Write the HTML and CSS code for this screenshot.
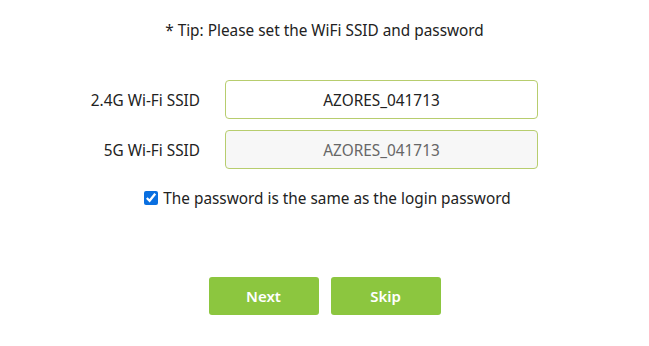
FILE: index.html
```html
<!DOCTYPE html>
<html>
<head>
<meta charset="utf-8">
<link rel="stylesheet" href="styles.css">
</head>
<body>
<div class="page">
  <p class="tip">* Tip: Please set the WiFi SSID and password</p>
  <div class="form">
    <div class="row">
      <label class="label">2.4G Wi-Fi SSID</label>
      <div class="input">AZORES_041713</div>
    </div>
    <div class="row">
      <label class="label">5G Wi-Fi SSID</label>
      <div class="input disabled">AZORES_041713</div>
    </div>
  </div>
  <label class="check">
    <input type="checkbox" checked>
    <span>The password is the same as the login password</span>
  </label>
  <div class="buttons">
    <button class="btn">Next</button>
    <button class="btn">Skip</button>
  </div>
</div>
</body>
</html>
```

FILE: styles.css
```css
html, body {
  margin: 0;
  padding: 0;
  background: #ffffff;
}
body {
  font-family: "Noto Sans", "Open Sans", sans-serif;
  color: #222;
  width: 649px;
  height: 346px;
  overflow: hidden;
}
.page {
  display: flex;
  flex-direction: column;
  align-items: center;
}
.tip {
  margin: 19px 0 0 0;
  font-size: 15.35px;
  line-height: 22px;
  text-align: center;
}
.form {
  margin-top: 39px;
  display: flex;
  flex-direction: column;
  gap: 11px;
  align-self: flex-start;
}
.row {
  display: grid;
  grid-template-columns: 200px 313px;
  column-gap: 25px;
  align-items: center;
}
.label {
  text-align: right;
  font-size: 15.35px;
}
.input {
  box-sizing: border-box;
  height: 39px;
  border: 1px solid #b7cd6e;
  border-radius: 4px;
  background: #fff;
  font-size: 15.35px;
  display: flex;
  align-items: center;
  justify-content: center;
  color: #222;
}
.input.disabled {
  background: #f7f7f7;
  color: #666;
}
.check {
  margin-top: 19px;
  display: flex;
  align-items: center;
  gap: 5px;
  font-size: 15.35px;
  margin-left: 6px;
}
.check input {
  margin: 0;
  width: 14px;
  height: 14px;
  accent-color: #0a6fe0;
}
.buttons {
  margin-top: 69px;
  display: flex;
  gap: 12px;
  margin-left: 0;
}
.btn {
  width: 110px;
  height: 38px;
  border: none;
  border-radius: 3px;
  background: #8cc63f;
  color: #fff;
  font-family: "Noto Sans", "Open Sans", sans-serif;
  font-size: 15px;
  font-weight: 600;
}
```
